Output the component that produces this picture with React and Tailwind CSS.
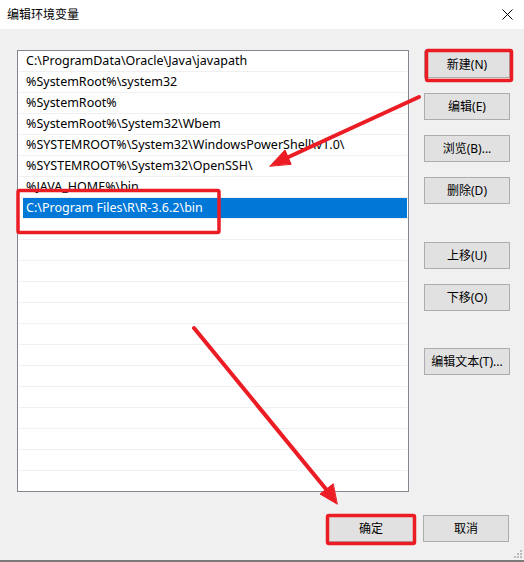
import React from 'react';

const paths = [
  'C:\\ProgramData\\Oracle\\Java\\javapath',
  '%SystemRoot%\\system32',
  '%SystemRoot%',
  '%SystemRoot%\\System32\\Wbem',
  '%SYSTEMROOT%\\System32\\WindowsPowerShell\\v1.0\\',
  '%SYSTEMROOT%\\System32\\OpenSSH\\',
  '%JAVA_HOME%\\bin',
  'C:\\Program Files\\R\\R-3.6.2\\bin',
];

const font = { fontFamily: '"Segoe UI", "Noto Sans", "Noto Sans CJK SC", sans-serif' };

function WinButton({ children, className = '' }) {
  return (
    <div className={`w-[86px] h-[27px] flex items-center justify-center bg-[#e1e1e1] border border-[#adadad] text-[12px] text-black ${className}`}>
      {children}
    </div>
  );
}

export default function App() {
  const rows = Array.from({ length: 21 }, (_, i) => paths[i] || '');

  return (
    <div className="relative w-[524px] h-[562px] bg-[#f0f0f0] overflow-hidden" style={font}>
      {/* 标题栏 */}
      <div className="h-[29px] bg-white flex items-center justify-between pl-[7px] pr-[11px]">
        <span className="text-[12px] text-black">编辑环境变量</span>
        <svg width="11" height="11" viewBox="0 0 11 11">
          <path d="M0.5 0.5 L10.5 10.5 M10.5 0.5 L0.5 10.5" stroke="#000" strokeWidth="1" />
        </svg>
      </div>

      {/* 主体 */}
      <div className="flex pt-[21px] pl-[17px]">
        <div className="w-[392px] h-[442px] bg-white border border-[#828790] overflow-hidden px-px">
          {rows.map((p, i) => (
            <div
              key={i}
              className={`h-[21px] flex items-center pt-px text-[12.5px] border-b border-[#f0f0f0] ${i === 7 ? 'bg-[#0078d7] text-white ml-[4px] pl-[3px]' : 'text-black pl-[7px]'}`}
            >
              <span className="whitespace-nowrap">{p}</span>
            </div>
          ))}
        </div>

        <div className="ml-[15px] flex flex-col pt-[1px]">
          <WinButton>新建(N)</WinButton>
          <WinButton className="mt-[15px]">编辑(E)</WinButton>
          <WinButton className="mt-[15px]">浏览(B)...</WinButton>
          <WinButton className="mt-[15px]">删除(D)</WinButton>
          <WinButton className="mt-[38px]">上移(U)</WinButton>
          <WinButton className="mt-[15px]">下移(O)</WinButton>
          <WinButton className="mt-[37px]">编辑文本(T)...</WinButton>
        </div>
      </div>

      {/* 底部按钮 */}
      <div className="flex justify-end gap-[9px] pr-[15px] mt-[23px]">
        <WinButton className="border-[#0078d7]">确定</WinButton>
        <WinButton>取消</WinButton>
      </div>

      {/* 尺寸调整角标 */}
      <svg className="absolute right-[2px] bottom-[4px]" width="8" height="8" viewBox="0 0 8 8">
        <rect x="6" y="0" width="2" height="2" fill="#bcbcbc" />
        <rect x="3" y="3" width="2" height="2" fill="#bcbcbc" />
        <rect x="6" y="3" width="2" height="2" fill="#bcbcbc" />
        <rect x="0" y="6" width="2" height="2" fill="#bcbcbc" />
        <rect x="3" y="6" width="2" height="2" fill="#bcbcbc" />
        <rect x="6" y="6" width="2" height="2" fill="#bcbcbc" />
      </svg>
      <div className="absolute left-0 right-0 bottom-0 h-[2px] bg-[#7a7a7a]" />

      {/* 红色标注 */}
      <svg className="absolute inset-0 pointer-events-none" width="524" height="562" viewBox="0 0 524 562">
        <g fill="none" stroke="#ec1c24" strokeWidth="3.5" strokeLinejoin="round">
          <rect x="426.5" y="50.5" width="85" height="30" rx="1.5" />
          <rect x="18" y="190.5" width="201" height="42" rx="1.5" />
          <rect x="327.5" y="515.5" width="87" height="28" rx="1.5" />
        </g>
        <g stroke="#ec1c24" strokeWidth="4" strokeLinecap="round" fill="#ec1c24">
          <line x1="419" y1="97" x2="282" y2="160" />
          <polygon points="270,166 285,150 291,164" strokeWidth="1" />
          <line x1="194" y1="328" x2="330" y2="494" />
          <polygon points="337,504 320,494 333,484" strokeWidth="1" />
        </g>
      </svg>
    </div>
  );
}
